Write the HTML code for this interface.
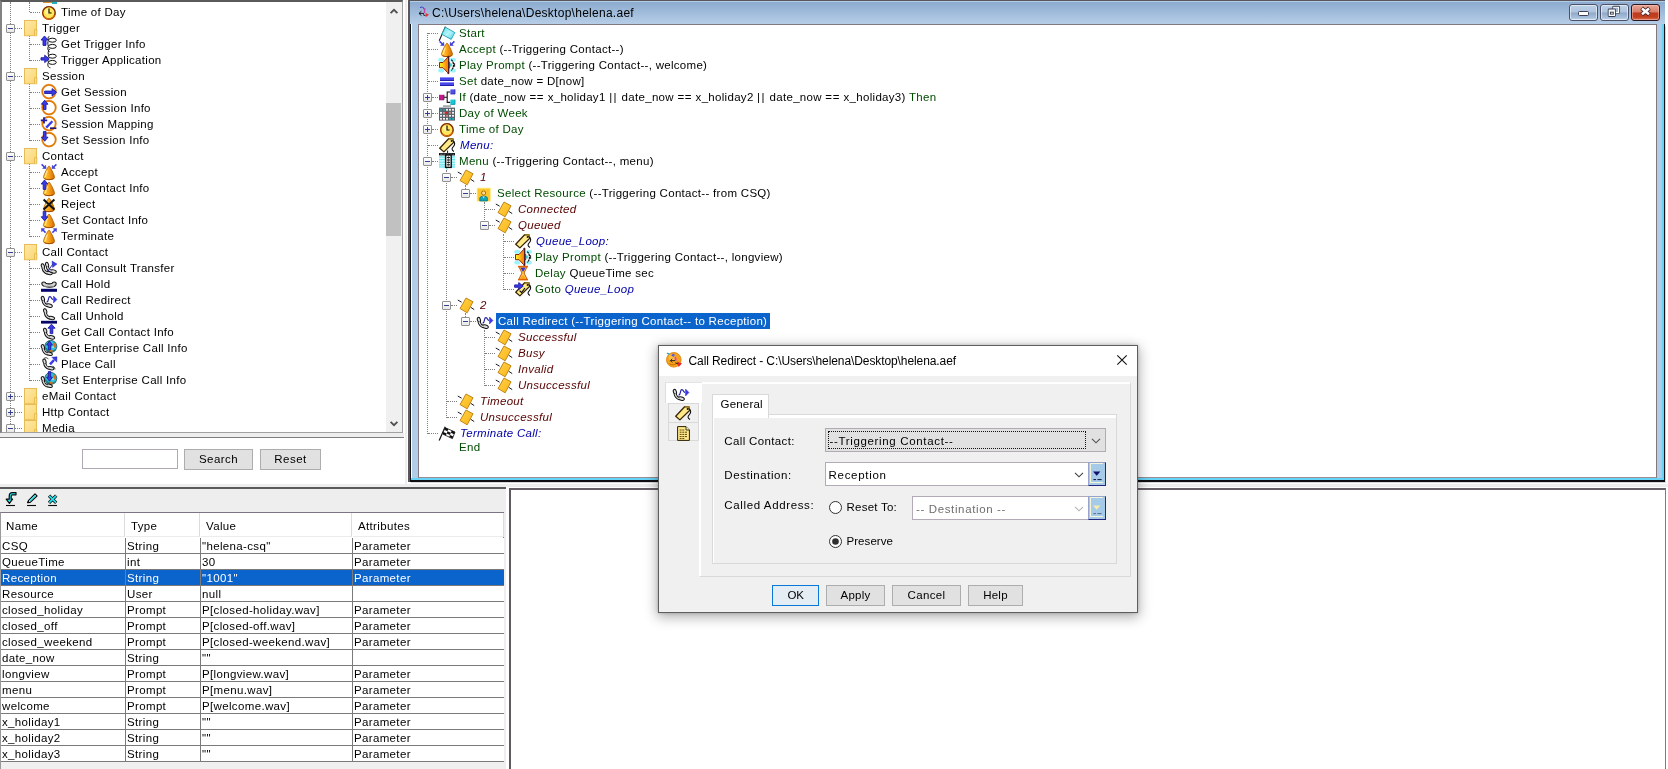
<!DOCTYPE html><html><head><meta charset="utf-8"><title>Script Editor</title><style>
*{box-sizing:border-box;margin:0;padding:0}
html,body{width:1668px;height:769px;overflow:hidden;background:#fff}
body{position:relative;-webkit-font-smoothing:antialiased;font-family:"Liberation Sans",sans-serif;color:#000}
.a{position:absolute}
.t{position:absolute;white-space:nowrap;font-size:11.5px;letter-spacing:.3px;line-height:16px;height:16px}
.g{color:#004c00}.b{color:#0000a8;font-style:italic}.r{color:#580000;font-style:italic}
.dl{position:absolute;border-left:1px dotted #808080;width:0}
.dh{position:absolute;border-top:1px dotted #808080;height:0}
.pm{position:absolute;width:9px;height:9px;border:1px solid #919191;border-radius:1px;background:linear-gradient(#fff,#e8e8e8)}
.pm i{position:absolute;left:1px;top:3px;width:5px;height:1px;background:#31408f}
.pm b{position:absolute;left:3px;top:1px;width:1px;height:5px;background:#31408f}
svg{position:absolute;overflow:visible}
.d{font-size:12px;letter-spacing:.2px;position:absolute;white-space:nowrap;line-height:16px}
.tb{position:absolute;white-space:nowrap;font-size:11.5px;letter-spacing:.35px;line-height:16px;height:16px}
.btn{position:absolute;border:1px solid #adadad;background:#e1e1e1;font-size:12px;letter-spacing:.3px;text-align:center;line-height:20px;height:22px}
</style></head><body><div id="root" style="position:absolute;left:0;top:0;width:1668px;height:769px;will-change:transform">
<svg width="0" height="0" style="position:absolute"><defs><linearGradient id="gfold" x1="0" y1="0" x2="1" y2="1"><stop offset="0" stop-color="#ffe9a8"/><stop offset="1" stop-color="#fad570"/></linearGradient>
<linearGradient id="gcone" x1="0" y1="0" x2="1" y2="0"><stop offset="0" stop-color="#ffd24a"/><stop offset=".45" stop-color="#fba81c"/><stop offset="1" stop-color="#d26a00"/></linearGradient>
<linearGradient id="gspk" x1="0" y1="0" x2="1" y2="0"><stop offset="0" stop-color="#fff020"/><stop offset=".35" stop-color="#ffc818"/><stop offset=".7" stop-color="#fa8a10"/><stop offset="1" stop-color="#f07010"/></linearGradient>
<linearGradient id="gflag" x1="0" y1="0" x2="1" y2="1"><stop offset="0" stop-color="#5edce8"/><stop offset=".5" stop-color="#b4f6fa"/><stop offset="1" stop-color="#4ed2e0"/></linearGradient>
<linearGradient id="gtag" x1="0" y1="0" x2="1" y2="1"><stop offset="0" stop-color="#ffd24a"/><stop offset="1" stop-color="#fcb416"/></linearGradient><symbol id="folder" viewBox="0 0 16 16" overflow="visible"><rect x=".5" y=".5" width="12" height="15.2" fill="url(#gfold)" stroke="#e8bc54" stroke-width="1"/><path d="M10.5 15.5V9.6H12.8V15.5" fill="#fbe08c" stroke="#e3b64c" stroke-width=".9"/></symbol><symbol id="clock" viewBox="0 0 16 16" overflow="visible"><circle cx="8" cy="9" r="7" fill="#e88a20"/><circle cx="7.9" cy="8.8" r="6.2" fill="#ffe65a" stroke="#7c2a00" stroke-width="1.3"/><path d="M3.2 12.8A6.4 6.4 0 0 0 13.6 11.4" fill="none" stroke="#d86a10" stroke-width="1.3"/><circle cx="6.6" cy="7.4" r="2.6" fill="#fff6b0" opacity=".7"/><path d="M8 4.6V9H10.6" fill="none" stroke="#1a0c00" stroke-width="1.2"/></symbol><symbol id="trginfo" viewBox="0 0 16 16" overflow="visible"><path d="M8.2 .2C6.6 1.4 7 3 7.6 4C6.6 6 6.6 8 7.4 10.2C6.4 12.4 6.8 14.6 8.6 15.8" fill="none" stroke="#101010" stroke-width="1"/><ellipse cx="11.4" cy="4.2" rx="3.9" ry="2" fill="#fff" stroke="#101010" stroke-width="1"/><ellipse cx="11.4" cy="10.4" rx="3.9" ry="2" fill="#fff" stroke="#101010" stroke-width="1"/><path d="M3.5 0L7 4H5.0V9.4H2.0V4H0Z" fill="#3a3ae6" stroke="#1c1ca8" stroke-width=".9"/></symbol><symbol id="trgapp" viewBox="0 0 16 16" overflow="visible"><path d="M8.6 -3C6.8 -1.4 7 2 7.6 4C6.6 6 6.6 8 7.4 10.2C6.4 12.6 6.6 15.4 9.4 15.8" fill="none" stroke="#101010" stroke-width="1"/><ellipse cx="11.4" cy="4.2" rx="3.9" ry="2" fill="#fff" stroke="#101010" stroke-width="1"/><ellipse cx="11.4" cy="10.4" rx="3.9" ry="2" fill="#fff" stroke="#101010" stroke-width="1"/><path d="M8.2 6.9L3.6999999999999993 3.2V5.7H0V8.1H3.6999999999999993V10.600000000000001Z" fill="#3a3ae6" stroke="#1c1ca8" stroke-width=".9"/></symbol><symbol id="sess_get" viewBox="0 0 16 16" overflow="visible"><circle cx="8" cy="7.6" r="7.5" fill="none" stroke="#f8d0a0" stroke-width=".8"/><circle cx="8" cy="7.6" r="6.7" fill="#fff" stroke="#e07a08" stroke-width="1.7"/><path d="M15.6 8.3L11.1 4.6V7.1000000000000005H3.6V9.5H11.1V12.0Z" fill="#3a3ae6" stroke="#1c1ca8" stroke-width=".9"/></symbol><symbol id="sess_info" viewBox="0 0 16 16" overflow="visible"><circle cx="8" cy="7.6" r="7.5" fill="none" stroke="#f8d0a0" stroke-width=".8"/><circle cx="8" cy="7.6" r="6.7" fill="#fff" stroke="#e07a08" stroke-width="1.7"/><path d="M3.6999999999999997 0.2L7.0 4.2H5.0V9.6H2.3999999999999995V4.2H0.4Z" fill="#3a3ae6" stroke="#1c1ca8" stroke-width=".9"/></symbol><symbol id="sess_map" viewBox="0 0 16 16" overflow="visible"><circle cx="8" cy="7.6" r="7.5" fill="none" stroke="#f8d0a0" stroke-width=".8"/><circle cx="8" cy="7.6" r="6.7" fill="#fff" stroke="#e07a08" stroke-width="1.7"/><path d="M3 1.2V7.4M-.2 4.3H6.2" stroke="#1c1ca8" stroke-width="1.8" fill="none"/><path d="M5.2 11.6L11.4 5.2" stroke="#3a3ae6" stroke-width="2.3"/><path d="M9 12.2H15.4" stroke="#28186a" stroke-width="1.7"/></symbol><symbol id="sess_set" viewBox="0 0 16 16" overflow="visible"><circle cx="8" cy="7.6" r="7.5" fill="none" stroke="#f8d0a0" stroke-width=".8"/><circle cx="8" cy="7.6" r="6.7" fill="#fff" stroke="#e07a08" stroke-width="1.7"/><path d="M3.6999999999999997 9.2L7.0 5.199999999999999H5.0V-0.4H2.3999999999999995V5.199999999999999H0.4Z" fill="#3a3ae6" stroke="#1c1ca8" stroke-width=".9"/></symbol><symbol id="cone" viewBox="0 0 16 16" overflow="visible"><path d="M8 2C7 2 2.4 11.6 2.4 13.4C2.4 16.4 13.6 16.4 13.6 13.4C13.6 11.6 9 2 8 2Z" fill="url(#gcone)" stroke="#b05a00" stroke-width=".8"/><path d="M6.4 6.4C5.4 8.6 4.4 11 4.4 13" stroke="#fff0a0" stroke-width="1.3" fill="none" opacity=".85"/><path d="M3.4 14.6C5 16 11 16 12.6 14.6" stroke="#a04800" stroke-width=".9" fill="none"/></symbol><symbol id="c_accept" viewBox="0 0 16 16" overflow="visible"><path d="M8 2C7 2 2.4 11.6 2.4 13.4C2.4 16.4 13.6 16.4 13.6 13.4C13.6 11.6 9 2 8 2Z" fill="url(#gcone)" stroke="#b05a00" stroke-width=".8"/><path d="M6.4 6.4C5.4 8.6 4.4 11 4.4 13" stroke="#fff0a0" stroke-width="1.3" fill="none" opacity=".85"/><path d="M3.4 14.6C5 16 11 16 12.6 14.6" stroke="#a04800" stroke-width=".9" fill="none"/><path d="M0.6 0.4L3.12 2.80" stroke="#3a3ae6" stroke-width="1.5"/><path d="M5 4.6L1.60 4.40L4.64 1.21Z" fill="#3a3ae6" stroke="#1c1ca8" stroke-width=".4"/><path d="M15.4 0.4L12.88 2.80" stroke="#3a3ae6" stroke-width="1.5"/><path d="M11 4.6L11.36 1.21L14.40 4.40Z" fill="#3a3ae6" stroke="#1c1ca8" stroke-width=".4"/></symbol><symbol id="c_get" viewBox="0 0 16 16" overflow="visible"><path d="M8 2C7 2 2.4 11.6 2.4 13.4C2.4 16.4 13.6 16.4 13.6 13.4C13.6 11.6 9 2 8 2Z" fill="url(#gcone)" stroke="#b05a00" stroke-width=".8"/><path d="M6.4 6.4C5.4 8.6 4.4 11 4.4 13" stroke="#fff0a0" stroke-width="1.3" fill="none" opacity=".85"/><path d="M3.4 14.6C5 16 11 16 12.6 14.6" stroke="#a04800" stroke-width=".9" fill="none"/><path d="M3.5 0L6.8 4H4.8V9.4H2.2V4H0.2Z" fill="#3a3ae6" stroke="#1c1ca8" stroke-width=".9"/></symbol><symbol id="c_reject" viewBox="0 0 16 16" overflow="visible"><path d="M8 2C7 2 2.4 11.6 2.4 13.4C2.4 16.4 13.6 16.4 13.6 13.4C13.6 11.6 9 2 8 2Z" fill="url(#gcone)" stroke="#b05a00" stroke-width=".8"/><path d="M6.4 6.4C5.4 8.6 4.4 11 4.4 13" stroke="#fff0a0" stroke-width="1.3" fill="none" opacity=".85"/><path d="M3.4 14.6C5 16 11 16 12.6 14.6" stroke="#a04800" stroke-width=".9" fill="none"/><path d="M2.6 3.4L13.4 13.6M13.4 3.4L2.6 13.6" stroke="#101010" stroke-width="2.1"/></symbol><symbol id="c_set" viewBox="0 0 16 16" overflow="visible"><path d="M8 2C7 2 2.4 11.6 2.4 13.4C2.4 16.4 13.6 16.4 13.6 13.4C13.6 11.6 9 2 8 2Z" fill="url(#gcone)" stroke="#b05a00" stroke-width=".8"/><path d="M6.4 6.4C5.4 8.6 4.4 11 4.4 13" stroke="#fff0a0" stroke-width="1.3" fill="none" opacity=".85"/><path d="M3.4 14.6C5 16 11 16 12.6 14.6" stroke="#a04800" stroke-width=".9" fill="none"/><path d="M3.5 8.8L6.8 4.800000000000001H4.8V-0.6H2.2V4.800000000000001H0.2Z" fill="#3a3ae6" stroke="#1c1ca8" stroke-width=".9"/></symbol><symbol id="c_term" viewBox="0 0 16 16" overflow="visible"><path d="M8 2C7 2 2.4 11.6 2.4 13.4C2.4 16.4 13.6 16.4 13.6 13.4C13.6 11.6 9 2 8 2Z" fill="url(#gcone)" stroke="#b05a00" stroke-width=".8"/><path d="M6.4 6.4C5.4 8.6 4.4 11 4.4 13" stroke="#fff0a0" stroke-width="1.3" fill="none" opacity=".85"/><path d="M3.4 14.6C5 16 11 16 12.6 14.6" stroke="#a04800" stroke-width=".9" fill="none"/><path d="M4.6 4.6L2.24 2.24" stroke="#3a3ae6" stroke-width="1.5"/><path d="M0.4 0.4L3.79 0.68L0.68 3.79Z" fill="#3a3ae6" stroke="#1c1ca8" stroke-width=".4"/><path d="M11.4 4.6L13.76 2.24" stroke="#3a3ae6" stroke-width="1.5"/><path d="M15.6 0.4L15.32 3.79L12.21 0.68Z" fill="#3a3ae6" stroke="#1c1ca8" stroke-width=".4"/></symbol><symbol id="p_consult" viewBox="0 0 16 16" overflow="visible"><g transform="translate(0,3.4) scale(1)"><path d="M2 4.6C2.4 7 4.6 9.2 6.6 9.8" fill="none" stroke="#141414" stroke-width="3"/><ellipse cx="1.9" cy="2.8" rx="1.5" ry="2.5" transform="rotate(-18 1.9 2.8)" fill="#dcdcdc" stroke="#141414" stroke-width="1"/><ellipse cx="8.4" cy="9.6" rx="3" ry="1.6" transform="rotate(14 8.4 9.6)" fill="#dcdcdc" stroke="#141414" stroke-width="1"/><path d="M2 4.8C2.6 7 4.6 9 6.4 9.7" fill="none" stroke="#dcdcdc" stroke-width="1.1"/></g><g transform="translate(4.2,2) scale(0.98)"><path d="M2 4.6C2.4 7 4.6 9.2 6.6 9.8" fill="none" stroke="#141414" stroke-width="3"/><ellipse cx="1.9" cy="2.8" rx="1.5" ry="2.5" transform="rotate(-18 1.9 2.8)" fill="#dcdcdc" stroke="#141414" stroke-width="1"/><ellipse cx="8.4" cy="9.6" rx="3" ry="1.6" transform="rotate(14 8.4 9.6)" fill="#dcdcdc" stroke="#141414" stroke-width="1"/><path d="M2 4.8C2.6 7 4.6 9 6.4 9.7" fill="none" stroke="#dcdcdc" stroke-width="1.1"/></g><path d="M6.6 11.6L12 3.8" stroke="#1c1ca8" stroke-width=".9"/><path d="M11 1L16 4L11.6 7.6Z" fill="#3a3ae6" stroke="#1c1ca8" stroke-width=".4"/></symbol><symbol id="p_hold" viewBox="0 0 16 16" overflow="visible"><path d="M.8 7.4C.8 5.6 4.6 5.6 4.8 7.2C6.6 8 9.4 8 11.2 7.2C11.4 5.6 15.2 5.6 15.2 7.4C15.2 9.6 12.4 11.2 8 11.2C3.6 11.2 .8 9.6 .8 7.4Z" fill="#d2d2d2" stroke="#141414" stroke-width="1.1"/><path d="M3 10.4H13" stroke="#8a8a8a" stroke-width=".9"/><rect x="0" y="12.8" width="16" height="3" fill="#06066a"/></symbol><symbol id="p_redirect" viewBox="0 0 16 16" overflow="visible"><g transform="translate(0,4) scale(1)"><path d="M2 4.6C2.4 7 4.6 9.2 6.6 9.8" fill="none" stroke="#141414" stroke-width="3"/><ellipse cx="1.9" cy="2.8" rx="1.5" ry="2.5" transform="rotate(-18 1.9 2.8)" fill="#dcdcdc" stroke="#141414" stroke-width="1"/><ellipse cx="8.4" cy="9.6" rx="3" ry="1.6" transform="rotate(14 8.4 9.6)" fill="#dcdcdc" stroke="#141414" stroke-width="1"/><path d="M2 4.8C2.6 7 4.6 9 6.4 9.7" fill="none" stroke="#dcdcdc" stroke-width="1.1"/></g><path d="M5.6 10.2C8.4 9.6 6.6 5 8.8 4.6C10.8 4.4 10 7.4 12 7.4" fill="none" stroke="#1c1ca8" stroke-width="1.1"/><path d="M12.5 4L16 7.5L12.5 11Z" fill="#3a3ae6" stroke="#1c1ca8" stroke-width=".4"/></symbol><symbol id="p_unhold" viewBox="0 0 16 16" overflow="visible"><g transform="translate(2.3,0.4) scale(1)"><path d="M2 4.6C2.4 7 4.6 9.2 6.6 9.8" fill="none" stroke="#141414" stroke-width="3"/><ellipse cx="1.9" cy="2.8" rx="1.5" ry="2.5" transform="rotate(-18 1.9 2.8)" fill="#dcdcdc" stroke="#141414" stroke-width="1"/><ellipse cx="8.4" cy="9.6" rx="3" ry="1.6" transform="rotate(14 8.4 9.6)" fill="#dcdcdc" stroke="#141414" stroke-width="1"/><path d="M2 4.8C2.6 7 4.6 9 6.4 9.7" fill="none" stroke="#dcdcdc" stroke-width="1.1"/></g><rect x="0" y="12.8" width="16" height="2.8" fill="#06066a"/></symbol><symbol id="p_getinfo" viewBox="0 0 16 16" overflow="visible"><g transform="translate(2.3,3.8) scale(1)"><path d="M2 4.6C2.4 7 4.6 9.2 6.6 9.8" fill="none" stroke="#141414" stroke-width="3"/><ellipse cx="1.9" cy="2.8" rx="1.5" ry="2.5" transform="rotate(-18 1.9 2.8)" fill="#dcdcdc" stroke="#141414" stroke-width="1"/><ellipse cx="8.4" cy="9.6" rx="3" ry="1.6" transform="rotate(14 8.4 9.6)" fill="#dcdcdc" stroke="#141414" stroke-width="1"/><path d="M2 4.8C2.6 7 4.6 9 6.4 9.7" fill="none" stroke="#dcdcdc" stroke-width="1.1"/></g><path d="M10.5 0.2L14.100000000000001 4.2H11.8V9.6H9.2V4.2H6.9Z" fill="#3a3ae6" stroke="#1c1ca8" stroke-width=".9"/></symbol><symbol id="p_getent" viewBox="0 0 16 16" overflow="visible"><circle cx="9.8" cy="6.4" r="6" fill="#30c4d6" stroke="#1c4a54" stroke-width=".8"/><path d="M4.6 8C6.6 11.4 12 12.4 14.8 9.4" stroke="#1a7a8a" stroke-width="1.4" fill="none"/><path d="M5.6 4L7.6 1.6L9 2.4L7.6 5.4ZM12 1.8L15 4.4L14.6 8.4L12.6 6.4ZM8 9.6L11 9.8L12 11.6L9.4 12Z" fill="#e06c10"/><path d="M10.6 7.6L12.4 5.6L13 8.2Z" fill="#90f0f0"/><path d="M6.4 1.6L8.4 .6L9 2Z" fill="#206a40"/><g transform="translate(0,4.2) scale(1)"><path d="M2 4.6C2.4 7 4.6 9.2 6.6 9.8" fill="none" stroke="#141414" stroke-width="3"/><ellipse cx="1.9" cy="2.8" rx="1.5" ry="2.5" transform="rotate(-18 1.9 2.8)" fill="#dcdcdc" stroke="#141414" stroke-width="1"/><ellipse cx="8.4" cy="9.6" rx="3" ry="1.6" transform="rotate(14 8.4 9.6)" fill="#dcdcdc" stroke="#141414" stroke-width="1"/><path d="M2 4.8C2.6 7 4.6 9 6.4 9.7" fill="none" stroke="#dcdcdc" stroke-width="1.1"/></g><path d="M8.5 1L11.399999999999999 5H9.7V9.6H7.3V5H5.6Z" fill="#3a3ae6" stroke="#1c1ca8" stroke-width=".9"/></symbol><symbol id="p_place" viewBox="0 0 16 16" overflow="visible"><g transform="translate(1.6,2.6) scale(1)"><path d="M2 4.6C2.4 7 4.6 9.2 6.6 9.8" fill="none" stroke="#141414" stroke-width="3"/><ellipse cx="1.9" cy="2.8" rx="1.5" ry="2.5" transform="rotate(-18 1.9 2.8)" fill="#dcdcdc" stroke="#141414" stroke-width="1"/><ellipse cx="8.4" cy="9.6" rx="3" ry="1.6" transform="rotate(14 8.4 9.6)" fill="#dcdcdc" stroke="#141414" stroke-width="1"/><path d="M2 4.8C2.6 7 4.6 9 6.4 9.7" fill="none" stroke="#dcdcdc" stroke-width="1.1"/></g><path d="M3 2.4C4.6 1.2 6.4 1.6 7.4 3.2M11.4 10.2C13 10.4 14.2 11.8 13.8 13.4" fill="none" stroke="#303030" stroke-width=".9"/><path d="M9 8.4L13 4" stroke="#3a3ae6" stroke-width="2.4"/><path d="M16 .8L15.8 6.2L10.8 1.2Z" fill="#3a3ae6" stroke="#1c1ca8" stroke-width=".4"/></symbol><symbol id="p_setent" viewBox="0 0 16 16" overflow="visible"><circle cx="9.8" cy="6.4" r="6" fill="#30c4d6" stroke="#1c4a54" stroke-width=".8"/><path d="M4.6 8C6.6 11.4 12 12.4 14.8 9.4" stroke="#1a7a8a" stroke-width="1.4" fill="none"/><path d="M5.6 4L7.6 1.6L9 2.4L7.6 5.4ZM12 1.8L15 4.4L14.6 8.4L12.6 6.4ZM8 9.6L11 9.8L12 11.6L9.4 12Z" fill="#e06c10"/><path d="M10.6 7.6L12.4 5.6L13 8.2Z" fill="#90f0f0"/><path d="M6.4 1.6L8.4 .6L9 2Z" fill="#206a40"/><g transform="translate(0,4.2) scale(1)"><path d="M2 4.6C2.4 7 4.6 9.2 6.6 9.8" fill="none" stroke="#141414" stroke-width="3"/><ellipse cx="1.9" cy="2.8" rx="1.5" ry="2.5" transform="rotate(-18 1.9 2.8)" fill="#dcdcdc" stroke="#141414" stroke-width="1"/><ellipse cx="8.4" cy="9.6" rx="3" ry="1.6" transform="rotate(14 8.4 9.6)" fill="#dcdcdc" stroke="#141414" stroke-width="1"/><path d="M2 4.8C2.6 7 4.6 9 6.4 9.7" fill="none" stroke="#dcdcdc" stroke-width="1.1"/></g><path d="M8.5 9.2L11.399999999999999 5.199999999999999H9.7V-0.4H7.3V5.199999999999999H5.6Z" fill="#3a3ae6" stroke="#1c1ca8" stroke-width=".9"/></symbol><symbol id="flag" viewBox="0 0 16 16" overflow="visible"><path d="M.2 15.8L6.4 1.6" stroke="#181818" stroke-width="1.1"/><path d="M6.4 2.2L15.8 7.6L12.2 14.4L2.8 9.2Z" fill="url(#gflag)" stroke="#18a0b4" stroke-width=".9"/></symbol><symbol id="speaker" viewBox="0 0 16 16" overflow="visible"><ellipse cx="2.2" cy="2.8" rx="3" ry="2" fill="#7af0f8" opacity=".75"/><ellipse cx="14" cy="2.8" rx="3" ry="2" fill="#7af0f8" opacity=".75"/><ellipse cx="2.2" cy="13.6" rx="3" ry="2" fill="#7af0f8" opacity=".75"/><ellipse cx="14" cy="13.6" rx="3" ry="2" fill="#7af0f8" opacity=".75"/><ellipse cx="12" cy="8" rx="1.3" ry="1.7" fill="#30e8f4"/><path d="M.5 5.5H4L8.8 .2V-.8H9.9V5.3H10.7V10.9H9.9V16.6H8.8V15.8L4 10.7H.5Z" fill="url(#gspk)" stroke="#7a1200" stroke-width=".9" stroke-linejoin="round"/><path d="M9.5 -.8V16.6" stroke="#401828" stroke-width=".9"/><path d="M12.3 2.6C15.3 5.4 15.3 10.6 12.3 13.4" fill="none" stroke="#0c0c0c" stroke-width="1.25" stroke-dasharray="2.2 .6"/><path d="M15.6 6.2V9.8" stroke="#0c0c0c" stroke-width=".9"/></symbol><symbol id="setico" viewBox="0 0 16 16" overflow="visible"><rect x="1" y="4" width="14" height="4" fill="#4646ea"/><rect x="1" y="4" width="14" height="1" fill="#8c8cf8"/><rect x="1" y="7" width="14" height="1" fill="#2020a8"/><rect x="1" y="9" width="14" height="4" fill="#4646ea"/><rect x="1" y="9" width="14" height="1" fill="#8c8cf8"/><rect x="1" y="12" width="14" height="1" fill="#2020a8"/></symbol><symbol id="ifico" viewBox="0 0 16 16" overflow="visible"><rect x="0" y="5.8" width="5" height="5" fill="#c2188e"/><path d="M0 10.8H5V5.8" fill="none" stroke="#7a0c58" stroke-width=".8"/><path d="M5 8.3H8.2M11.4 3H8.2V13.4H11.4" fill="none" stroke="#101010" stroke-width="1.1"/><rect x="11.4" y=".4" width="4.6" height="4.6" fill="#5050e8"/><path d="M11.4 5H16V.4" fill="none" stroke="#2828a0" stroke-width=".8"/><rect x="11.4" y="10.6" width="4.6" height="4.8" fill="#14cad8"/><path d="M11.4 15.4H16V10.6" fill="none" stroke="#0c8a98" stroke-width=".8"/></symbol><symbol id="calendar" viewBox="0 0 16 16" overflow="visible"><rect x="4" y=".6" width="8" height=".9" fill="#505860"/><rect x="0" y="2.6" width="16" height="13" fill="#596068"/><rect x="1.1" y="3.9" width="1.8" height="1.8" fill="#28a0a8"/><rect x="4.1" y="3.9" width="1.8" height="1.8" fill="#28a0a8"/><rect x="7.1" y="3.9" width="1.8" height="1.8" fill="#fff"/><rect x="10.1" y="3.9" width="1.8" height="1.8" fill="#fff"/><rect x="13.1" y="3.9" width="1.8" height="1.8" fill="#fff"/><rect x="1.1" y="6.9" width="1.8" height="1.8" fill="#fff"/><rect x="4.1" y="6.9" width="1.8" height="1.8" fill="#d89090"/><rect x="7.1" y="6.9" width="1.8" height="1.8" fill="#f01818"/><rect x="10.1" y="6.9" width="1.8" height="1.8" fill="#d89090"/><rect x="13.1" y="6.9" width="1.8" height="1.8" fill="#fff"/><rect x="1.1" y="9.9" width="1.8" height="1.8" fill="#fff"/><rect x="4.1" y="9.9" width="1.8" height="1.8" fill="#fff"/><rect x="7.1" y="9.9" width="1.8" height="1.8" fill="#d89090"/><rect x="10.1" y="9.9" width="1.8" height="1.8" fill="#fff"/><rect x="13.1" y="9.9" width="1.8" height="1.8" fill="#fff"/><rect x="1.1" y="12.9" width="1.8" height="1.8" fill="#fff"/><rect x="4.1" y="12.9" width="1.8" height="1.8" fill="#fff"/><rect x="7.1" y="12.9" width="1.8" height="1.8" fill="#fff"/><rect x="10.1" y="12.9" width="1.8" height="1.8" fill="#18b8c8"/><rect x="13.1" y="12.9" width="1.8" height="1.8" fill="#18b8c8"/></symbol><symbol id="label" viewBox="0 0 16 16" overflow="visible"><path d="M.7 11.2L9.6 1.7L14.1 1.9L14.8 5.3L4.9 14.9Z" fill="#ffe888" stroke="#342400" stroke-width="1.25" stroke-linejoin="round"/><path d="M9.6 1.7L14.1 1.9L14.6 4" fill="none" stroke="#c89a20" stroke-width=".8"/><circle cx="12.6" cy="3.9" r="1" fill="#241800"/><path d="M13.4 3.6C16 4.6 16.4 7.6 14.4 9.6C12.6 11.2 12.4 13.6 15 14.4" fill="none" stroke="#0c0c0c" stroke-width="1.1"/></symbol><symbol id="menuico" viewBox="0 0 16 16" overflow="visible"><rect x="0" y="2.6" width="6" height="12" fill="#c4f6fa"/><rect x="12.6" y="2.6" width="3.4" height="12" fill="#c4f6fa"/><path d="M0 4H6M0 6.6H6M0 9.2H6M0 11.8H6M0 14H6M12.6 4H16M12.6 6.6H16M12.6 9.2H16M12.6 11.8H16M12.6 14H16" stroke="#5ce2ee" stroke-width="1"/><rect x="0" y="0" width="16" height="2.4" fill="#161616"/><path d="M1.2 1.2H14.8" stroke="#a8a8a8" stroke-width=".7" stroke-dasharray="2.4 .8"/><rect x="6.6" y="2" width="5.6" height="12.4" fill="#fff" stroke="#0c0c0c" stroke-width="1.4"/><path d="M7.8 4.6H11M7.8 7H11M7.8 9.4H11M7.8 11.8H11" stroke="#0c0c0c" stroke-width="1"/><path d="M9.4 3V13.4" stroke="#0c0c0c" stroke-width=".5"/><path d="M8.6 -2.4V0" stroke="#101010" stroke-width="1"/><path d="M7 15.4L8.6 16.4" stroke="#30c8d8" stroke-width="1"/></symbol><symbol id="tag" viewBox="0 0 16 16" overflow="visible"><path d="M-.2 3L3.6 5.2M12.6 10.2L16.2 12.6" stroke="#181818" stroke-width="1"/><path d="M8 1L15 4.8L9.2 15.8L2 11.6Z" fill="url(#gtag)" stroke="#b87c08" stroke-width=".9"/></symbol><symbol id="selres" viewBox="0 0 16 16" overflow="visible"><rect x=".2" y="3.2" width="13" height="12.8" fill="#ffc62a" stroke="#ffe46a" stroke-width=".8"/><circle cx="6.6" cy="8" r="2.1" fill="#ffd890" stroke="#985c00" stroke-width=".8"/><path d="M2.8 16V13C2.8 10.6 10.4 10.6 10.4 13V16Z" fill="#12a4b8" stroke="#0a6a78" stroke-width=".7"/><path d="M5.4 11.4L6.6 13.2L7.8 11.4Z" fill="#e8f8f8"/></symbol><symbol id="hourglass" viewBox="0 0 16 16" overflow="visible"><path d="M3.8 1.6H12.2L9 8L12.2 14.4H3.8L7 8Z" fill="#ffd25a" stroke="#c85000" stroke-width="1"/><path d="M5.2 2.4H10.8L8 7Z" fill="#3434d0"/><path d="M8 9.4L10.8 14H5.2Z" fill="#ffa418"/><rect x="3" y=".8" width="10" height="1.5" fill="#e06000"/><rect x="3" y="13.9" width="10" height="1.5" fill="#e06000"/></symbol><symbol id="gotoico" viewBox="0 0 16 16" overflow="visible"><path d="M.7 11.2L9.6 1.7L14.1 1.9L14.8 5.3L4.9 14.9Z" fill="#ffe888" stroke="#342400" stroke-width="1.25" stroke-linejoin="round"/><path d="M9.6 1.7L14.1 1.9L14.6 4" fill="none" stroke="#c89a20" stroke-width=".8"/><circle cx="12.6" cy="3.9" r="1" fill="#241800"/><path d="M13.4 3.6C16 4.6 16.4 7.6 14.4 9.6C12.6 11.2 12.4 13.6 15 14.4" fill="none" stroke="#0c0c0c" stroke-width="1.1"/><path d="M8.2 5.1L3.6999999999999993 1.6V3.8999999999999995H-0.4V6.3H3.6999999999999993V8.6Z" fill="#3a3ae6" stroke="#1c1ca8" stroke-width=".9"/><path d="M4.6 9.6L6.6 11.6L10 7" fill="none" stroke="#101010" stroke-width="1.2"/></symbol><symbol id="chkflag" viewBox="0 0 16 16" overflow="visible"><path d="M.2 15.4L6.2 1.8" stroke="#101010" stroke-width="1.2"/><path d="M6 2.6L16 7L13.4 13.6L3.6 9Z" fill="#fff" stroke="#101010" stroke-width=".8"/><path d="M6 2.6L9.3 4.1L8.5 6.3L5.2 4.7ZM12.7 5.5L16 7L15.1 9.2L11.8 7.7ZM8.5 6.3L11.8 7.7L11 9.9L7.7 8.4ZM4.4 6.9L7.7 8.4L6.9 10.5L3.6 9ZM11 9.9L14.3 11.4L13.4 13.6L10.2 12.1Z" fill="#101010"/></symbol><symbol id="appico" viewBox="0 0 16 16" overflow="visible"><g transform="scale(1.3333)"><path d="M2 1.6C4 .6 6.4 1.2 6 3.4" fill="none" stroke="#3838c0" stroke-width="1"/><path d="M6.6 2.2C8 3.6 5 5 7 7" fill="none" stroke="#c83ca0" stroke-width="1.3"/><path d="M1 7.4H6M3.4 5.2L1 7.4L3.4 9.6" fill="none" stroke="#181818" stroke-width="1"/><path d="M7.4 7L11 8.4L8.2 11Z" fill="#e83030"/><path d="M5 8.6L7.6 9.8" stroke="#181818" stroke-width="1"/></g></symbol></defs></svg>
<div class="a" style="left:0px;top:0px;width:403px;height:433px;background:#fff;border-left:2px solid #828282;border-top:2px solid #5a5a5a;border-right:1px solid #a0a0a0;border-bottom:1px solid #a0a0a0"></div>
<div class="a" style="left:386px;top:2px;width:16px;height:430px;background:#f0f0f0"></div>
<div class="a" style="left:386px;top:103px;width:15px;height:133px;background:#c1c1c1"></div>
<svg style="left:390px;top:8px" width="8" height="7" viewBox="0 0 8 7"><path d="M.6 5.2 L4 1.8 L7.4 5.2" fill="none" stroke="#505050" stroke-width="1.8"/></svg>
<svg style="left:390px;top:420px" width="8" height="7" viewBox="0 0 8 7"><path d="M.6 1.8 L4 5.2 L7.4 1.8" fill="none" stroke="#505050" stroke-width="1.8"/></svg>
<div class="a" style="left:0px;top:433px;width:404px;height:4px;background:#eeeeee"></div>
<div class="a" style="left:0px;top:437px;width:404px;height:1px;background:#7e7e7e"></div>
<div class="a" style="left:0;top:0;width:386px;height:432px;overflow:hidden">
<div class="dl" style="left:10px;top:2px;height:430px"></div>
<div class="dl" style="left:29px;top:2px;height:10px"></div>
<div class="dl" style="left:29px;top:36px;height:25px"></div>
<div class="dl" style="left:29px;top:84px;height:57px"></div>
<div class="dl" style="left:29px;top:164px;height:73px"></div>
<div class="dl" style="left:29px;top:260px;height:121px"></div>
<div class="dh" style="left:30px;top:12px;width:10px"></div>
<svg style="left:41px;top:4px" width="16" height="16" viewBox="0 0 16 16"><use href="#clock"/></svg>
<div class="t" style="left:61px;top:4px;">Time of Day</div>
<div class="dh" style="left:15px;top:28px;width:7px"></div>
<div class="pm" style="left:6px;top:24px"><i></i></div>
<svg style="left:24px;top:20px" width="16" height="16" viewBox="0 0 16 16"><use href="#folder"/></svg>
<div class="t" style="left:42px;top:20px;">Trigger</div>
<div class="dh" style="left:30px;top:44px;width:10px"></div>
<svg style="left:41px;top:36px" width="16" height="16" viewBox="0 0 16 16"><use href="#trginfo"/></svg>
<div class="t" style="left:61px;top:36px;">Get Trigger Info</div>
<div class="dh" style="left:30px;top:60px;width:10px"></div>
<svg style="left:41px;top:52px" width="16" height="16" viewBox="0 0 16 16"><use href="#trgapp"/></svg>
<div class="t" style="left:61px;top:52px;">Trigger Application</div>
<div class="dh" style="left:15px;top:76px;width:7px"></div>
<div class="pm" style="left:6px;top:72px"><i></i></div>
<svg style="left:24px;top:68px" width="16" height="16" viewBox="0 0 16 16"><use href="#folder"/></svg>
<div class="t" style="left:42px;top:68px;">Session</div>
<div class="dh" style="left:30px;top:92px;width:10px"></div>
<svg style="left:41px;top:84px" width="16" height="16" viewBox="0 0 16 16"><use href="#sess_get"/></svg>
<div class="t" style="left:61px;top:84px;">Get Session</div>
<div class="dh" style="left:30px;top:108px;width:10px"></div>
<svg style="left:41px;top:100px" width="16" height="16" viewBox="0 0 16 16"><use href="#sess_info"/></svg>
<div class="t" style="left:61px;top:100px;">Get Session Info</div>
<div class="dh" style="left:30px;top:124px;width:10px"></div>
<svg style="left:41px;top:116px" width="16" height="16" viewBox="0 0 16 16"><use href="#sess_map"/></svg>
<div class="t" style="left:61px;top:116px;">Session Mapping</div>
<div class="dh" style="left:30px;top:140px;width:10px"></div>
<svg style="left:41px;top:132px" width="16" height="16" viewBox="0 0 16 16"><use href="#sess_set"/></svg>
<div class="t" style="left:61px;top:132px;">Set Session Info</div>
<div class="dh" style="left:15px;top:156px;width:7px"></div>
<div class="pm" style="left:6px;top:152px"><i></i></div>
<svg style="left:24px;top:148px" width="16" height="16" viewBox="0 0 16 16"><use href="#folder"/></svg>
<div class="t" style="left:42px;top:148px;">Contact</div>
<div class="dh" style="left:30px;top:172px;width:10px"></div>
<svg style="left:41px;top:164px" width="16" height="16" viewBox="0 0 16 16"><use href="#c_accept"/></svg>
<div class="t" style="left:61px;top:164px;">Accept</div>
<div class="dh" style="left:30px;top:188px;width:10px"></div>
<svg style="left:41px;top:180px" width="16" height="16" viewBox="0 0 16 16"><use href="#c_get"/></svg>
<div class="t" style="left:61px;top:180px;">Get Contact Info</div>
<div class="dh" style="left:30px;top:204px;width:10px"></div>
<svg style="left:41px;top:196px" width="16" height="16" viewBox="0 0 16 16"><use href="#c_reject"/></svg>
<div class="t" style="left:61px;top:196px;">Reject</div>
<div class="dh" style="left:30px;top:220px;width:10px"></div>
<svg style="left:41px;top:212px" width="16" height="16" viewBox="0 0 16 16"><use href="#c_set"/></svg>
<div class="t" style="left:61px;top:212px;">Set Contact Info</div>
<div class="dh" style="left:30px;top:236px;width:10px"></div>
<svg style="left:41px;top:228px" width="16" height="16" viewBox="0 0 16 16"><use href="#c_term"/></svg>
<div class="t" style="left:61px;top:228px;">Terminate</div>
<div class="dh" style="left:15px;top:252px;width:7px"></div>
<div class="pm" style="left:6px;top:248px"><i></i></div>
<svg style="left:24px;top:244px" width="16" height="16" viewBox="0 0 16 16"><use href="#folder"/></svg>
<div class="t" style="left:42px;top:244px;">Call Contact</div>
<div class="dh" style="left:30px;top:268px;width:10px"></div>
<svg style="left:41px;top:260px" width="16" height="16" viewBox="0 0 16 16"><use href="#p_consult"/></svg>
<div class="t" style="left:61px;top:260px;">Call Consult Transfer</div>
<div class="dh" style="left:30px;top:284px;width:10px"></div>
<svg style="left:41px;top:276px" width="16" height="16" viewBox="0 0 16 16"><use href="#p_hold"/></svg>
<div class="t" style="left:61px;top:276px;">Call Hold</div>
<div class="dh" style="left:30px;top:300px;width:10px"></div>
<svg style="left:41px;top:292px" width="16" height="16" viewBox="0 0 16 16"><use href="#p_redirect"/></svg>
<div class="t" style="left:61px;top:292px;">Call Redirect</div>
<div class="dh" style="left:30px;top:316px;width:10px"></div>
<svg style="left:41px;top:308px" width="16" height="16" viewBox="0 0 16 16"><use href="#p_unhold"/></svg>
<div class="t" style="left:61px;top:308px;">Call Unhold</div>
<div class="dh" style="left:30px;top:332px;width:10px"></div>
<svg style="left:41px;top:324px" width="16" height="16" viewBox="0 0 16 16"><use href="#p_getinfo"/></svg>
<div class="t" style="left:61px;top:324px;">Get Call Contact Info</div>
<div class="dh" style="left:30px;top:348px;width:10px"></div>
<svg style="left:41px;top:340px" width="16" height="16" viewBox="0 0 16 16"><use href="#p_getent"/></svg>
<div class="t" style="left:61px;top:340px;">Get Enterprise Call Info</div>
<div class="dh" style="left:30px;top:364px;width:10px"></div>
<svg style="left:41px;top:356px" width="16" height="16" viewBox="0 0 16 16"><use href="#p_place"/></svg>
<div class="t" style="left:61px;top:356px;">Place Call</div>
<div class="dh" style="left:30px;top:380px;width:10px"></div>
<svg style="left:41px;top:372px" width="16" height="16" viewBox="0 0 16 16"><use href="#p_setent"/></svg>
<div class="t" style="left:61px;top:372px;">Set Enterprise Call Info</div>
<div class="dh" style="left:15px;top:396px;width:7px"></div>
<div class="pm" style="left:6px;top:392px"><i></i><b></b></div>
<svg style="left:24px;top:388px" width="16" height="16" viewBox="0 0 16 16"><use href="#folder"/></svg>
<div class="t" style="left:42px;top:388px;">eMail Contact</div>
<div class="dh" style="left:15px;top:412px;width:7px"></div>
<div class="pm" style="left:6px;top:408px"><i></i><b></b></div>
<svg style="left:24px;top:404px" width="16" height="16" viewBox="0 0 16 16"><use href="#folder"/></svg>
<div class="t" style="left:42px;top:404px;">Http Contact</div>
<div class="dh" style="left:15px;top:428px;width:7px"></div>
<div class="pm" style="left:6px;top:424px"><i></i></div>
<svg style="left:24px;top:420px" width="16" height="16" viewBox="0 0 16 16"><use href="#folder"/></svg>
<div class="t" style="left:42px;top:420px;">Media</div>
<div class="a" style="left:43px;top:2px;width:10px;height:1px;background:#e09030"></div>
<div class="a" style="left:52px;top:2px;width:5px;height:2px;background:#20b0c0"></div>
</div>
<div class="a" style="left:82px;top:449px;width:96px;height:20px;background:#fff;border:1px solid #b0a8b4"></div>
<div class="btn" style="left:184px;top:449px;width:69px;height:21px;line-height:19px;font-size:11.5px;letter-spacing:.45px">Search</div>
<div class="btn" style="left:260px;top:449px;width:61px;height:21px;line-height:19px;font-size:11.5px;letter-spacing:.45px">Reset</div>
<div class="a" style="left:408px;top:0px;width:1257px;height:482px;background:#b2cde8;border-left:2px solid #5a565c;border-top:1.5px solid #5a565c"></div>
<div class="a" style="left:410px;top:1.5px;width:1255px;height:22.5px;background:linear-gradient(#8dabce,#9db9d9 40%,#b6cde7)"></div>
<div class="a" style="left:410px;top:24px;width:1px;height:457px;background:#15151a"></div>
<div class="a" style="left:411px;top:24px;width:1px;height:454px;background:#fff"></div>
<div class="a" style="left:404.7px;top:0px;width:2.1px;height:484px;background:#eeeeee"></div>
<div class="a" style="left:1664px;top:24px;width:1px;height:457px;background:#15151a"></div>
<div class="a" style="left:410px;top:480px;width:1255px;height:1.5px;background:#101014"></div>
<div class="a" style="left:411px;top:481.5px;width:1255px;height:1px;background:#d8d8d8"></div>
<div class="a" style="left:1665px;top:26px;width:1px;height:456px;background:#d8d8d8"></div>
<div class="a" style="left:411px;top:478px;width:1253px;height:2px;background:#66d4f6"></div>
<div class="a" style="left:1662px;top:24px;width:2px;height:456px;background:#66d4f6"></div>
<div class="a" style="left:1661px;top:24px;width:1px;height:454px;background:#9cd2f0"></div>
<div class="a" style="left:418px;top:24px;width:1239px;height:454px;background:#fff;border:1px solid #827880;border-bottom-color:#9a8c94"></div>
<div class="a" style="left:432px;top:5px;font-size:12px;line-height:16px;white-space:nowrap;letter-spacing:.27px">C:\Users\helena\Desktop\helena.aef</div>
<svg style="left:418px;top:6px" width="12" height="12" viewBox="0 0 12 12"><use href="#appico"/></svg>
<div class="a" style="left:1569.4px;top:3.8px;width:28.9px;height:17.1px;border:1px solid #4c5068;border-radius:3px;box-shadow:inset 0 0 0 1px rgba(255,255,255,.55);background:linear-gradient(#bccfe6,#aec4de 48%,#90a8c8 52%,#a8c0dc 85%,#c4d8ee)"></div>
<div class="a" style="left:1600.2px;top:3.8px;width:29.1px;height:17.1px;border:1px solid #4c5068;border-radius:3px;box-shadow:inset 0 0 0 1px rgba(255,255,255,.55);background:linear-gradient(#bccfe6,#aec4de 48%,#90a8c8 52%,#a8c0dc 85%,#c4d8ee)"></div>
<div class="a" style="left:1631px;top:3.8px;width:29.3px;height:17.1px;border:1px solid #2a1820;border-radius:3px;box-shadow:inset 0 0 0 1px rgba(255,200,190,.5);background:linear-gradient(#e8a898,#d87a66 48%,#be3a20 52%,#c2401e 80%,#d8705a)"></div>
<div class="a" style="left:1578.3px;top:11px;width:10.6px;height:5px;background:#fff;border:1px solid #3c4054;border-radius:1.5px"></div>
<svg style="left:1607px;top:5px" width="14" height="13" viewBox="0 0 14 13"><path d="M6.8 2.2H11.6V7.6H6.8Z" fill="#9fb6d4" stroke="#34384c" stroke-width="2.9" stroke-linejoin="round"/><path d="M6.8 2.2H11.6V7.6H6.8Z" fill="#9fb6d4" stroke="#fff" stroke-width="1.15"/><path d="M2.2 5H7.4V10.5H2.2Z" fill="#e8eef6" stroke="#34384c" stroke-width="2.9" stroke-linejoin="round"/><path d="M2.2 5H7.4V10.5H2.2Z" fill="#e8eef6" stroke="#fff" stroke-width="1.15"/><rect x="3.4" y="7.2" width="2.9" height="1.9" fill="#fff" stroke="#34384c" stroke-width=".9"/></svg>
<svg style="left:1639px;top:6px" width="13" height="11" viewBox="0 0 13 11"><path d="M2.6 2.2L10.4 8.6M10.4 2.2L2.6 8.6" stroke="#4a2428" stroke-width="4.2"/><path d="M3 2.6L10 8.2M10 2.6L3 8.2" stroke="#fff" stroke-width="2.5"/></svg>
<div class="dl" style="left:427px;top:33px;height:401px"></div>
<div class="dl" style="left:446px;top:170px;height:248px"></div>
<div class="dl" style="left:465px;top:185px;height:4px"></div>
<div class="dl" style="left:465px;top:313px;height:4px"></div>
<div class="dl" style="left:484px;top:202px;height:24px"></div>
<div class="dl" style="left:484px;top:330px;height:56px"></div>
<div class="dl" style="left:503px;top:234px;height:56px"></div>
<div class="dh" style="left:428px;top:33px;width:10px"></div>
<svg style="left:439px;top:25px" width="16" height="16" viewBox="0 0 16 16"><use href="#flag"/></svg>
<div class="t" style="left:459px;top:25px;"><span class="g">Start</span></div>
<div class="dh" style="left:428px;top:49px;width:10px"></div>
<svg style="left:439px;top:41px" width="16" height="16" viewBox="0 0 16 16"><use href="#c_accept"/></svg>
<div class="t" style="left:459px;top:41px;"><span class="g">Accept</span> (--Triggering Contact--)</div>
<div class="dh" style="left:428px;top:65px;width:10px"></div>
<svg style="left:439px;top:57px" width="16" height="16" viewBox="0 0 16 16"><use href="#speaker"/></svg>
<div class="t" style="left:459px;top:57px;"><span class="g">Play Prompt</span> (--Triggering Contact--, welcome)</div>
<div class="dh" style="left:428px;top:81px;width:10px"></div>
<svg style="left:439px;top:73px" width="16" height="16" viewBox="0 0 16 16"><use href="#setico"/></svg>
<div class="t" style="left:459px;top:73px;"><span class="g">Set</span> date_now = D[now]</div>
<div class="pm" style="left:423px;top:93px"><i></i><b></b></div>
<div class="dh" style="left:432px;top:97px;width:6px"></div>
<svg style="left:439px;top:89px" width="16" height="16" viewBox="0 0 16 16"><use href="#ifico"/></svg>
<div class="t" style="left:459px;top:89px;"><span class="g">If</span> (date_now <span style="letter-spacing:.65px">==</span> x_holiday1 <span style="letter-spacing:1.5px">||</span> date_now <span style="letter-spacing:.65px">==</span> x_holiday2 <span style="letter-spacing:1.5px">||</span> date_now <span style="letter-spacing:.65px">==</span> x_holiday3) <span class="g">Then</span></div>
<div class="pm" style="left:423px;top:109px"><i></i><b></b></div>
<div class="dh" style="left:432px;top:113px;width:6px"></div>
<svg style="left:439px;top:105px" width="16" height="16" viewBox="0 0 16 16"><use href="#calendar"/></svg>
<div class="t" style="left:459px;top:105px;"><span class="g">Day of Week</span></div>
<div class="pm" style="left:423px;top:125px"><i></i><b></b></div>
<div class="dh" style="left:432px;top:129px;width:6px"></div>
<svg style="left:439px;top:121px" width="16" height="16" viewBox="0 0 16 16"><use href="#clock"/></svg>
<div class="t" style="left:459px;top:121px;"><span class="g">Time of Day</span></div>
<div class="dh" style="left:428px;top:145px;width:10px"></div>
<svg style="left:439px;top:137px" width="16" height="16" viewBox="0 0 16 16"><use href="#label"/></svg>
<div class="t" style="left:460px;top:137px;"><span class="b">Menu:</span></div>
<div class="pm" style="left:423px;top:157px"><i></i></div>
<div class="dh" style="left:432px;top:161px;width:6px"></div>
<svg style="left:439px;top:153px" width="16" height="16" viewBox="0 0 16 16"><use href="#menuico"/></svg>
<div class="t" style="left:459px;top:153px;"><span class="g">Menu</span> (--Triggering Contact--, menu)</div>
<div class="pm" style="left:442px;top:173px"><i></i></div>
<div class="dh" style="left:451px;top:177px;width:6px"></div>
<svg style="left:458px;top:169px" width="16" height="16" viewBox="0 0 16 16"><use href="#tag"/></svg>
<div class="t" style="left:480px;top:169px;"><span class="r">1</span></div>
<div class="pm" style="left:461px;top:189px"><i></i></div>
<div class="dh" style="left:470px;top:193px;width:6px"></div>
<svg style="left:477px;top:185px" width="16" height="16" viewBox="0 0 16 16"><use href="#selres"/></svg>
<div class="t" style="left:497px;top:185px;"><span class="g">Select Resource</span> (--Triggering Contact-- from CSQ)</div>
<div class="dh" style="left:485px;top:209px;width:10px"></div>
<svg style="left:496px;top:201px" width="16" height="16" viewBox="0 0 16 16"><use href="#tag"/></svg>
<div class="t" style="left:518px;top:201px;"><span class="r">Connected</span></div>
<div class="pm" style="left:480px;top:221px"><i></i></div>
<div class="dh" style="left:489px;top:225px;width:6px"></div>
<svg style="left:496px;top:217px" width="16" height="16" viewBox="0 0 16 16"><use href="#tag"/></svg>
<div class="t" style="left:518px;top:217px;"><span class="r">Queued</span></div>
<div class="dh" style="left:504px;top:241px;width:10px"></div>
<svg style="left:515px;top:233px" width="16" height="16" viewBox="0 0 16 16"><use href="#label"/></svg>
<div class="t" style="left:536px;top:233px;"><span class="b">Queue_Loop:</span></div>
<div class="dh" style="left:504px;top:257px;width:10px"></div>
<svg style="left:515px;top:249px" width="16" height="16" viewBox="0 0 16 16"><use href="#speaker"/></svg>
<div class="t" style="left:535px;top:249px;"><span class="g">Play Prompt</span> (--Triggering Contact--, longview)</div>
<div class="dh" style="left:504px;top:273px;width:10px"></div>
<svg style="left:515px;top:265px" width="16" height="16" viewBox="0 0 16 16"><use href="#hourglass"/></svg>
<div class="t" style="left:535px;top:265px;"><span class="g">Delay</span> QueueTime sec</div>
<div class="dh" style="left:504px;top:289px;width:10px"></div>
<svg style="left:515px;top:281px" width="16" height="16" viewBox="0 0 16 16"><use href="#gotoico"/></svg>
<div class="t" style="left:535px;top:281px;"><span class="g">Goto </span><span class="b">Queue_Loop</span></div>
<div class="pm" style="left:442px;top:301px"><i></i></div>
<div class="dh" style="left:451px;top:305px;width:6px"></div>
<svg style="left:458px;top:297px" width="16" height="16" viewBox="0 0 16 16"><use href="#tag"/></svg>
<div class="t" style="left:480px;top:297px;"><span class="r">2</span></div>
<div class="pm" style="left:461px;top:317px"><i></i></div>
<div class="dh" style="left:470px;top:321px;width:6px"></div>
<svg style="left:477px;top:313px" width="16" height="16" viewBox="0 0 16 16"><use href="#p_redirect"/></svg>
<div class="t" style="left:496px;top:313px;height:16px;line-height:16px;background:#0a64cc;color:#fff;padding:0 3px 0 2px">Call Redirect (--Triggering Contact-- to Reception)</div>
<div class="dh" style="left:485px;top:337px;width:10px"></div>
<svg style="left:496px;top:329px" width="16" height="16" viewBox="0 0 16 16"><use href="#tag"/></svg>
<div class="t" style="left:518px;top:329px;"><span class="r">Successful</span></div>
<div class="dh" style="left:485px;top:353px;width:10px"></div>
<svg style="left:496px;top:345px" width="16" height="16" viewBox="0 0 16 16"><use href="#tag"/></svg>
<div class="t" style="left:518px;top:345px;"><span class="r">Busy</span></div>
<div class="dh" style="left:485px;top:369px;width:10px"></div>
<svg style="left:496px;top:361px" width="16" height="16" viewBox="0 0 16 16"><use href="#tag"/></svg>
<div class="t" style="left:518px;top:361px;"><span class="r">Invalid</span></div>
<div class="dh" style="left:485px;top:385px;width:10px"></div>
<svg style="left:496px;top:377px" width="16" height="16" viewBox="0 0 16 16"><use href="#tag"/></svg>
<div class="t" style="left:518px;top:377px;"><span class="r">Unsuccessful</span></div>
<div class="dh" style="left:447px;top:401px;width:10px"></div>
<svg style="left:458px;top:393px" width="16" height="16" viewBox="0 0 16 16"><use href="#tag"/></svg>
<div class="t" style="left:480px;top:393px;"><span class="r">Timeout</span></div>
<div class="dh" style="left:447px;top:417px;width:10px"></div>
<svg style="left:458px;top:409px" width="16" height="16" viewBox="0 0 16 16"><use href="#tag"/></svg>
<div class="t" style="left:480px;top:409px;"><span class="r">Unsuccessful</span></div>
<div class="dh" style="left:428px;top:433px;width:10px"></div>
<svg style="left:439px;top:425px" width="16" height="16" viewBox="0 0 16 16"><use href="#chkflag"/></svg>
<div class="t" style="left:460px;top:425px;"><span class="b">Terminate Call:</span></div>
<div class="t" style="left:459px;top:439px;"><span class="g">End</span></div>
<div class="a" style="left:0px;top:484px;width:1668px;height:3px;background:#eeeeee"></div>
<div class="a" style="left:0px;top:487px;width:506px;height:2px;background:#5a5a5a"></div>
<div class="a" style="left:0px;top:489px;width:506px;height:280px;background:#eeeeee"></div>
<div class="a" style="left:506px;top:487px;width:3px;height:282px;background:#fff"></div>
<div class="a" style="left:509px;top:487.5px;width:1157px;height:282px;background:#fff;border-left:2px solid #5e5a60;border-top:2.4px solid #665f66;border-right:1px solid #7c7c7c"></div>
<svg style="left:5px;top:491px" width="13" height="16" viewBox="0 0 13 16"><path d="M11 1.6H7C4.6 1.6 4.2 3.6 4.2 5.4V8.2H1.2L4.4 12.4L7.6 8.2H6.2V5.6C6.2 4.4 6.6 3.8 7.6 3.8H11Z" fill="#22e4f0" stroke="#0a0a0a" stroke-width="1.2" stroke-linejoin="round"/><path d="M1 14.5H10" stroke="#0a0a0a" stroke-width="1.1"/></svg>
<svg style="left:26px;top:492px" width="13" height="15" viewBox="0 0 13 15"><path d="M1.6 10.6L2.4 8.6L9 2L11 4L4.2 10.4Z" fill="#fff" stroke="#0a0a0a" stroke-width="1.2" stroke-linejoin="round"/><path d="M3.6 9L9.6 3.2" stroke="#22e4f0" stroke-width="1.3"/><path d="M1.4 10.8L2.4 8.8L3.8 10.2Z" fill="#0a0a0a"/><path d="M1 13.5H10" stroke="#0a0a0a" stroke-width="1.1"/></svg>
<svg style="left:47px;top:492px" width="13" height="15" viewBox="0 0 13 15"><path d="M2 3.6L9.2 10.8M9.2 3.6L2 10.8" stroke="#0a0a0a" stroke-width="3.2"/><path d="M2.2 3.8L9 10.6M9 3.8L2.2 10.6" stroke="#22e4f0" stroke-width="1.7"/><path d="M1.2 13.5H10" stroke="#0a0a0a" stroke-width="1.1"/></svg>
<div class="a" style="left:0px;top:512px;width:504.4px;height:257px;background:#fff;border:1px solid #7c7484;border-left-color:#9a9a9a;border-bottom:none"></div>
<div class="a" style="left:1px;top:513px;width:124px;height:24px;background:#fff;border-right:1px solid #dcdcdc;border-bottom:1px solid #ececec"></div>
<div class="tb" style="left:6px;top:518px">Name</div>
<div class="a" style="left:126px;top:513px;width:74px;height:24px;background:#fff;border-right:1px solid #dcdcdc;border-bottom:1px solid #ececec"></div>
<div class="tb" style="left:131px;top:518px">Type</div>
<div class="a" style="left:201px;top:513px;width:151px;height:24px;background:#fff;border-right:1px solid #dcdcdc;border-bottom:1px solid #ececec"></div>
<div class="tb" style="left:206px;top:518px">Value</div>
<div class="a" style="left:353px;top:513px;width:151px;height:24px;background:#fff;border-right:1px solid #dcdcdc;border-bottom:1px solid #ececec"></div>
<div class="tb" style="left:358px;top:518px">Attributes</div>
<div class="a" style="left:1px;top:538px;width:503px;height:15px;background:#fff"></div>
<div class="a" style="left:1px;top:553px;width:503px;height:1px;background:#7a7a7a"></div>
<div class="tb" style="left:2px;top:538px;">CSQ</div>
<div class="tb" style="left:127px;top:538px;">String</div>
<div class="tb" style="left:202px;top:538px;">&quot;helena-csq&quot;</div>
<div class="tb" style="left:354px;top:538px;">Parameter</div>
<div class="a" style="left:1px;top:554px;width:503px;height:15px;background:#fff"></div>
<div class="a" style="left:1px;top:569px;width:503px;height:1px;background:#7a7a7a"></div>
<div class="tb" style="left:2px;top:554px;">QueueTime</div>
<div class="tb" style="left:127px;top:554px;">int</div>
<div class="tb" style="left:202px;top:554px;">30</div>
<div class="tb" style="left:354px;top:554px;">Parameter</div>
<div class="a" style="left:1px;top:570px;width:503px;height:15px;background:#0a64cc"></div>
<div class="a" style="left:1px;top:585px;width:503px;height:1px;background:#7a7a7a"></div>
<div class="tb" style="left:2px;top:570px;color:#fff">Reception</div>
<div class="tb" style="left:127px;top:570px;color:#fff">String</div>
<div class="tb" style="left:202px;top:570px;color:#fff">&quot;1001&quot;</div>
<div class="tb" style="left:354px;top:570px;color:#fff">Parameter</div>
<div class="a" style="left:1px;top:586px;width:503px;height:15px;background:#fff"></div>
<div class="a" style="left:1px;top:601px;width:503px;height:1px;background:#7a7a7a"></div>
<div class="tb" style="left:2px;top:586px;">Resource</div>
<div class="tb" style="left:127px;top:586px;">User</div>
<div class="tb" style="left:202px;top:586px;">null</div>
<div class="tb" style="left:354px;top:586px;"></div>
<div class="a" style="left:1px;top:602px;width:503px;height:15px;background:#fff"></div>
<div class="a" style="left:1px;top:617px;width:503px;height:1px;background:#7a7a7a"></div>
<div class="tb" style="left:2px;top:602px;">closed_holiday</div>
<div class="tb" style="left:127px;top:602px;">Prompt</div>
<div class="tb" style="left:202px;top:602px;">P[closed-holiday.wav]</div>
<div class="tb" style="left:354px;top:602px;">Parameter</div>
<div class="a" style="left:1px;top:618px;width:503px;height:15px;background:#fff"></div>
<div class="a" style="left:1px;top:633px;width:503px;height:1px;background:#7a7a7a"></div>
<div class="tb" style="left:2px;top:618px;">closed_off</div>
<div class="tb" style="left:127px;top:618px;">Prompt</div>
<div class="tb" style="left:202px;top:618px;">P[closed-off.wav]</div>
<div class="tb" style="left:354px;top:618px;">Parameter</div>
<div class="a" style="left:1px;top:634px;width:503px;height:15px;background:#fff"></div>
<div class="a" style="left:1px;top:649px;width:503px;height:1px;background:#7a7a7a"></div>
<div class="tb" style="left:2px;top:634px;">closed_weekend</div>
<div class="tb" style="left:127px;top:634px;">Prompt</div>
<div class="tb" style="left:202px;top:634px;">P[closed-weekend.wav]</div>
<div class="tb" style="left:354px;top:634px;">Parameter</div>
<div class="a" style="left:1px;top:650px;width:503px;height:15px;background:#fff"></div>
<div class="a" style="left:1px;top:665px;width:503px;height:1px;background:#7a7a7a"></div>
<div class="tb" style="left:2px;top:650px;">date_now</div>
<div class="tb" style="left:127px;top:650px;">String</div>
<div class="tb" style="left:202px;top:650px;">&quot;&quot;</div>
<div class="tb" style="left:354px;top:650px;"></div>
<div class="a" style="left:1px;top:666px;width:503px;height:15px;background:#fff"></div>
<div class="a" style="left:1px;top:681px;width:503px;height:1px;background:#7a7a7a"></div>
<div class="tb" style="left:2px;top:666px;">longview</div>
<div class="tb" style="left:127px;top:666px;">Prompt</div>
<div class="tb" style="left:202px;top:666px;">P[longview.wav]</div>
<div class="tb" style="left:354px;top:666px;">Parameter</div>
<div class="a" style="left:1px;top:682px;width:503px;height:15px;background:#fff"></div>
<div class="a" style="left:1px;top:697px;width:503px;height:1px;background:#7a7a7a"></div>
<div class="tb" style="left:2px;top:682px;">menu</div>
<div class="tb" style="left:127px;top:682px;">Prompt</div>
<div class="tb" style="left:202px;top:682px;">P[menu.wav]</div>
<div class="tb" style="left:354px;top:682px;">Parameter</div>
<div class="a" style="left:1px;top:698px;width:503px;height:15px;background:#fff"></div>
<div class="a" style="left:1px;top:713px;width:503px;height:1px;background:#7a7a7a"></div>
<div class="tb" style="left:2px;top:698px;">welcome</div>
<div class="tb" style="left:127px;top:698px;">Prompt</div>
<div class="tb" style="left:202px;top:698px;">P[welcome.wav]</div>
<div class="tb" style="left:354px;top:698px;">Parameter</div>
<div class="a" style="left:1px;top:714px;width:503px;height:15px;background:#fff"></div>
<div class="a" style="left:1px;top:729px;width:503px;height:1px;background:#7a7a7a"></div>
<div class="tb" style="left:2px;top:714px;">x_holiday1</div>
<div class="tb" style="left:127px;top:714px;">String</div>
<div class="tb" style="left:202px;top:714px;">&quot;&quot;</div>
<div class="tb" style="left:354px;top:714px;">Parameter</div>
<div class="a" style="left:1px;top:730px;width:503px;height:15px;background:#fff"></div>
<div class="a" style="left:1px;top:745px;width:503px;height:1px;background:#7a7a7a"></div>
<div class="tb" style="left:2px;top:730px;">x_holiday2</div>
<div class="tb" style="left:127px;top:730px;">String</div>
<div class="tb" style="left:202px;top:730px;">&quot;&quot;</div>
<div class="tb" style="left:354px;top:730px;">Parameter</div>
<div class="a" style="left:1px;top:746px;width:503px;height:15px;background:#fff"></div>
<div class="a" style="left:1px;top:761px;width:503px;height:1px;background:#7a7a7a"></div>
<div class="tb" style="left:2px;top:746px;">x_holiday3</div>
<div class="tb" style="left:127px;top:746px;">String</div>
<div class="tb" style="left:202px;top:746px;">&quot;&quot;</div>
<div class="tb" style="left:354px;top:746px;">Parameter</div>
<div class="a" style="left:125px;top:538px;width:1px;height:224px;background:#7a7a7a"></div>
<div class="a" style="left:200px;top:538px;width:1px;height:224px;background:#7a7a7a"></div>
<div class="a" style="left:352px;top:538px;width:1px;height:224px;background:#7a7a7a"></div>
<div class="a" style="left:1px;top:762px;width:503px;height:7px;background:#f0f0f0"></div>
<div class="a" style="left:658px;top:345px;width:480px;height:268px;background:#f0f0f0;border:1px solid #5e5e5e;box-shadow:0 3px 12px 1px rgba(0,0,0,.32),0 0 3px rgba(0,0,0,.2)"></div>
<div class="a" style="left:659px;top:346px;width:478px;height:30px;background:#fff"></div>
<svg style="left:666px;top:352px" width="17" height="16" viewBox="0 0 17 16"><circle cx="7.8" cy="7.8" r="7.3" fill="#f5a21c" stroke="#de8410" stroke-width=".9"/><circle cx="6" cy="5.6" r="3.4" fill="#ffc24a" opacity=".8"/><path d="M3.4 11.6C5.6 13.4 9.6 13 11.4 10.6" fill="none" stroke="#c86400" stroke-width="1"/><path d="M4.4 8.6H9M6.2 6.8L4.4 8.6L6.2 10.4" fill="none" stroke="#282828" stroke-width="1"/><path d="M5.2 3.4L7 1.6L9 3L7.6 5Z" fill="#5a5ae0"/><path d="M8.6 5.4C10.4 6 8.8 7.6 10.4 8.4" stroke="#e040c0" stroke-width="1.7" fill="none"/><path d="M1 1L3.4 2.4" stroke="#20a0b0" stroke-width="1.4"/><path d="M11 9.6L16 11.4L12.6 15Z" fill="#e02c2c"/><path d="M9.4 10.8L12 12" stroke="#202020" stroke-width="1"/></svg>
<div class="a" style="left:688.5px;top:352.6px;font-size:12px;line-height:17px;white-space:nowrap;letter-spacing:-0.093px">Call Redirect - C:\Users\helena\Desktop\helena.aef</div>
<svg style="left:1117px;top:355px" width="10" height="10" viewBox="0 0 10 10"><path d="M.3 .3L9.7 9.7M9.7 .3L.3 9.7" stroke="#101010" stroke-width="1.1"/></svg>
<div class="a" style="left:699px;top:382px;width:432px;height:195px;background:#f0f0f0;border:1px solid #d9d9d9;border-left-color:#fff;border-top-color:#fdfdfd;box-shadow:inset 1px 1px 0 #fff"></div>
<div class="a" style="left:665.4px;top:381.6px;width:36.8px;height:21.6px;background:#fff;border-left:1px solid #dedede;border-top:1px solid #e4e4e4"></div>
<div class="a" style="left:668px;top:403px;width:31px;height:20px;background:#f0f0f0;border:1px solid #d9d9d9"></div>
<div class="a" style="left:668px;top:422px;width:31px;height:19px;background:#f0f0f0;border:1px solid #d9d9d9;border-top-color:#d9d9d9"></div>
<svg style="left:673px;top:385px" width="16" height="16" viewBox="0 0 16 16"><use href="#p_redirect"/></svg>
<svg style="left:675px;top:405px" width="16" height="16" viewBox="0 0 16 16"><use href="#label"/></svg>
<svg style="left:677px;top:426px" width="13" height="15" viewBox="0 0 13 15"><path d="M.6 .6H9L12.4 4V14.4H.6Z" fill="#ffe98e" stroke="#2a2000" stroke-width="1"/><path d="M9 .6V4H12.4" fill="#fff8d0" stroke="#2a2000" stroke-width=".9"/><path d="M2.6 4H7.4M2.6 6.2H10.4M2.6 8.4H10.4M2.6 10.6H10.4M2.6 12.6H8" stroke="#5a4600" stroke-width="1" stroke-dasharray="2 .7"/></svg>
<div class="a" style="left:712px;top:414px;width:405px;height:150px;background:#fff;border:1px solid #d9d9d9"></div>
<div class="a" style="left:714px;top:418px;width:402px;height:145px;background:#f0f0f0"></div>
<div class="a" style="left:712px;top:394px;width:57px;height:24px;background:#fff;border:1px solid #d9d9d9;border-bottom:none"></div>
<div class="a" style="left:720.5px;top:396px;font-size:11.5px;line-height:16px;white-space:nowrap;letter-spacing:0.198px">General</div>
<div class="a" style="left:724.3px;top:433px;font-size:11.5px;line-height:16px;white-space:nowrap;color:#000;letter-spacing:0.359px">Call Contact:</div>
<div class="a" style="left:724.3px;top:467px;font-size:11.5px;line-height:16px;white-space:nowrap;color:#000;letter-spacing:0.564px">Destination:</div>
<div class="a" style="left:724.3px;top:497px;font-size:11.5px;line-height:16px;white-space:nowrap;color:#000;letter-spacing:0.63px">Called Address:</div>
<div class="a" style="left:825px;top:428px;width:281px;height:24px;background:#e1e1e1;border:1px solid #b2aab6"></div>
<div class="a" style="left:828px;top:431px;width:258px;height:18px;border:1px dotted #101010"></div>
<div class="a" style="left:829.5px;top:433px;font-size:11.5px;line-height:16px;white-space:nowrap;color:#000;letter-spacing:0.659px">--Triggering Contact--</div>
<svg style="left:1091px;top:438px" width="10" height="6" viewBox="0 0 10 6"><path d="M1 .8L5 4.8L9 .8" fill="none" stroke="#505050" stroke-width="1.1"/></svg>
<div class="a" style="left:825px;top:462px;width:264px;height:24px;background:#fff;border:1px solid #b2aab6;border-right:none"></div>
<div class="a" style="left:828.6px;top:467px;font-size:11.5px;line-height:16px;white-space:nowrap;color:#000;letter-spacing:0.691px">Reception</div>
<svg style="left:1074px;top:472px" width="10" height="6" viewBox="0 0 10 6"><path d="M1 .8L5 4.8L9 .8" fill="none" stroke="#404040" stroke-width="1.1"/></svg>
<div class="a" style="left:1088px;top:462px;width:18px;height:24px;background:#a6cbe9;border:1px solid #98a4d0;border-right:1.5px solid #26267c;border-bottom:1.5px solid #26267c"></div>
<div class="a" style="left:1090px;top:463px;width:13px;height:20px;border:1px solid #f4f4dc;border-right:none;border-bottom-color:#f4f4dc"></div>
<svg style="left:1092px;top:471px" width="10" height="11" viewBox="0 0 10 11"><path d="M1 .6H8.4L4.7 4.8Z" fill="#101070"/><path d="M1.4 8.6H4M5.4 8.6H9.6" stroke="#101040" stroke-width="1"/></svg>
<svg style="left:828px;top:500px" width="15" height="15" viewBox="0 0 15 15"><circle cx="7.5" cy="7.5" r="6" fill="#fff" stroke="#303030" stroke-width="1"/></svg>
<div class="a" style="left:846.5px;top:499px;font-size:11.5px;line-height:16px;white-space:nowrap;color:#000;letter-spacing:0.237px">Reset To:</div>
<div class="a" style="left:912px;top:496px;width:177px;height:24px;background:#fff;border:1px solid #b2aab6;border-right:none"></div>
<div class="a" style="left:916px;top:501px;font-size:11.5px;line-height:16px;white-space:nowrap;color:#6e6e6e;letter-spacing:0.633px">-- Destination --</div>
<svg style="left:1074px;top:506px" width="10" height="6" viewBox="0 0 10 6"><path d="M1 .8L5 4.8L9 .8" fill="none" stroke="#b4b4b4" stroke-width="1.1"/></svg>
<div class="a" style="left:1088px;top:496px;width:18px;height:24px;background:#a6cbe9;border:1px solid #98a4d0;border-right:1.5px solid #26267c;border-bottom:1.5px solid #26267c"></div>
<div class="a" style="left:1090px;top:497px;width:13px;height:20px;border:1px solid #f4f4dc;border-right:none;border-bottom-color:#f4f4dc"></div>
<svg style="left:1092px;top:505px" width="10" height="11" viewBox="0 0 10 11"><path d="M1 .6H8.4L4.7 4.8Z" fill="#f6ecb0"/><path d="M1.4 8.6H4M5.4 8.6H9.6" stroke="#5a6a90" stroke-width="1"/></svg>
<svg style="left:828px;top:534px" width="15" height="15" viewBox="0 0 15 15"><circle cx="7.5" cy="7.5" r="6" fill="#fff" stroke="#303030" stroke-width="1"/><circle cx="7.5" cy="7.5" r="3.3" fill="#303030"/></svg>
<div class="a" style="left:846.5px;top:533px;font-size:11.5px;line-height:16px;white-space:nowrap;color:#000;letter-spacing:0.06px">Preserve</div>
<div class="a" style="left:772px;top:585px;width:47px;height:21px;border:1.5px solid #0a78d8;background:#e4ecf4"></div>
<div class="a" style="left:787.5px;top:586.6px;font-size:11.5px;line-height:16px;white-space:nowrap;color:#000;letter-spacing:-0.308px">OK</div>
<div class="a" style="left:826px;top:585px;width:59px;height:21px;border:1px solid #adadad;background:#e1e1e1"></div>
<div class="a" style="left:840.5px;top:586.6px;font-size:11.5px;line-height:16px;white-space:nowrap;color:#000;letter-spacing:0.247px">Apply</div>
<div class="a" style="left:892px;top:585px;width:69px;height:21px;border:1px solid #adadad;background:#e1e1e1"></div>
<div class="a" style="left:907.5px;top:586.6px;font-size:11.5px;line-height:16px;white-space:nowrap;color:#000;letter-spacing:0.367px">Cancel</div>
<div class="a" style="left:968px;top:585px;width:55px;height:21px;border:1px solid #adadad;background:#e1e1e1"></div>
<div class="a" style="left:983.25px;top:586.6px;font-size:11.5px;line-height:16px;white-space:nowrap;color:#000;letter-spacing:0.212px">Help</div>
</div></body></html>
